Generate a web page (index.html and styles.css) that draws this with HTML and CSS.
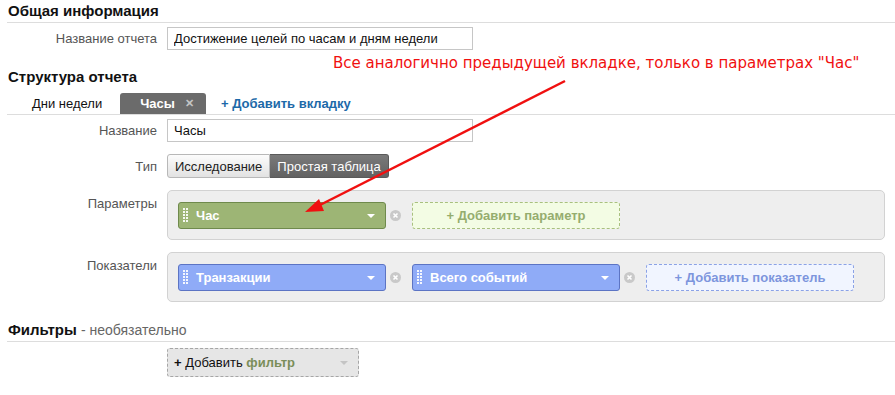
FILE: index.html
```html
<!DOCTYPE html>
<html lang="ru">
<head>
    <meta charset="UTF-8">
    <meta name="viewport" content="width=device-width, initial-scale=1.0">
    <title>Структура отчета</title>
    <link rel="stylesheet" href="styles.css">
</head>
<body>
<div class="page">
    <h2 class="section-title">Общая информация</h2>
    <div class="row row-first">
        <label class="row-label" for="report-name">Название отчета</label>
        <input class="text-input" type="text" id="report-name" value="Достижение целей по часам и дням недели">
    </div>

    <h2 class="section-title no-line title-structure">Структура отчета</h2>
    <div class="tabs">
        <span class="tab">Дни недели</span>
        <span class="tab tab-active">Часы<span class="tab-close">&#x2715;</span></span>
        <a class="tab tab-add" href="#">+ Добавить вкладку</a>
    </div>

    <div class="row row-name">
        <label class="row-label" for="tab-name">Название</label>
        <input class="text-input" type="text" id="tab-name" value="Часы">
    </div>

    <div class="row row-type">
        <span class="row-label">Тип</span>
        <div class="btn-group">
            <button type="button" class="btn">Исследование</button>
            <button type="button" class="btn btn-on">Простая таблица</button>
        </div>
    </div>

    <div class="row row-top">
        <span class="row-label">Параметры</span>
        <div class="drop-box">
            <div class="chip chip-green"><span class="grip"></span>Час<span class="caret"></span></div>
            <svg class="remove" width="11" height="11" viewBox="0 0 11 11"><circle cx="5.5" cy="5.5" r="5.5" fill="#c9c9c9"/><path d="M3.5 3.5l4 4M7.5 3.5l-4 4" stroke="#fff" stroke-width="1.6"/></svg>
            <div class="add-slot add-green">+ Добавить параметр</div>
        </div>
    </div>

    <div class="row row-top">
        <span class="row-label">Показатели</span>
        <div class="drop-box">
            <div class="chip chip-blue"><span class="grip"></span>Транзакции<span class="caret"></span></div>
            <svg class="remove" width="11" height="11" viewBox="0 0 11 11"><circle cx="5.5" cy="5.5" r="5.5" fill="#c9c9c9"/><path d="M3.5 3.5l4 4M7.5 3.5l-4 4" stroke="#fff" stroke-width="1.6"/></svg>
            <div class="chip chip-blue"><span class="grip"></span>Всего событий<span class="caret"></span></div>
            <svg class="remove" width="11" height="11" viewBox="0 0 11 11"><circle cx="5.5" cy="5.5" r="5.5" fill="#c9c9c9"/><path d="M3.5 3.5l4 4M7.5 3.5l-4 4" stroke="#fff" stroke-width="1.6"/></svg>
            <div class="add-slot add-blue">+ Добавить показатель</div>
        </div>
    </div>

    <h2 class="section-title title-filters">Фильтры <span class="optional">- необязательно</span></h2>
    <div class="row row-filter">
        <span class="row-label"></span>
        <div class="filter-select"><b>+</b> Добавить <b class="filter-word">фильтр</b><span class="caret caret-gray"></span></div>
    </div>

    <div class="note">Все аналогично предыдущей вкладке, только в параметрах "Час"</div>
    <svg class="arrow" width="895" height="395" viewBox="0 0 895 395">
        <line x1="565" y1="81" x2="318" y2="206" stroke="#f01010" stroke-width="2.5"/>
        <polygon points="305,212 319,199 324,211" fill="#f01010"/>
    </svg>
</div>
</body>
</html>
```

FILE: styles.css
```css
body {
    margin: 0;
    font-family: "Liberation Sans", Arial, sans-serif;
    font-size: 13px;
    color: #222;
    background: #fff;
}
.page {
    position: relative;
    width: 888px;
    height: 395px;
    padding-left: 7px;
    overflow: hidden;
}
.section-title {
    margin: 0;
    padding-left: 1px;
    font-size: 15px;
    line-height: 22px;
    font-weight: bold;
    color: #111;
    border-bottom: 1px solid #ddd;
}
.section-title.no-line {
    border-bottom: none;
}
.title-structure {
    margin-top: 16px;
}
.title-filters {
    margin-top: 17px;
}
.optional {
    font-weight: normal;
    font-size: 14px;
    color: #666;
}
.row {
    display: flex;
    align-items: center;
    padding-right: 10px;
}
.row-label {
    width: 150px;
    flex: none;
    margin-right: 10px;
    text-align: right;
    color: #555;
}
.row-first {
    margin-top: 4px;
}
.row-name {
    margin-top: 4px;
}
.row-type {
    margin-top: 12px;
}
.row-top {
    margin-top: 12px;
    align-items: flex-start;
}
.row-top .row-label {
    padding-top: 6px;
}
.row-filter {
    margin-top: 6px;
}
.text-input {
    width: 306px;
    height: 23px;
    box-sizing: border-box;
    padding: 0 6px;
    border: 1px solid #c6c6c6;
    font-family: inherit;
    font-size: 13px;
    color: #111;
}
.tabs {
    display: flex;
    align-items: flex-end;
    height: 26px;
    padding-left: 13px;
    border-bottom: 1px solid #ddd;
}
.tab {
    display: inline-flex;
    align-items: center;
    height: 21px;
    padding: 0 12px;
    white-space: nowrap;
    color: #111;
}
.tab-active {
    margin-left: 6px;
    padding: 0 12px 0 20px;
    background: #6b6b6b;
    color: #fff;
    font-weight: bold;
    border-radius: 3px 3px 0 0;
}
.tab-close {
    margin-left: 10px;
    color: #c4c4c4;
    font-size: 11px;
    font-weight: bold;
}
.tab-add {
    padding-left: 15px;
    color: #1c69a8;
    font-weight: bold;
    text-decoration: none;
}
.btn-group {
    display: flex;
}
.btn {
    height: 24px;
    padding: 0 7px;
    border: 1px solid #b8b8b8;
    background: linear-gradient(#fcfcfc, #e2e2e2);
    font-family: inherit;
    font-size: 13px;
    color: #222;
    border-radius: 3px 0 0 3px;
}
.btn-on {
    border-color: #5a5a5a;
    border-left: none;
    background: linear-gradient(#7a7a7a, #626262);
    color: #fff;
    border-radius: 0 3px 3px 0;
}
.drop-box {
    flex: 1;
    display: flex;
    align-items: center;
    height: 48px;
    padding: 0 10px;
    background: #eee;
    border: 1px solid #d2d2d2;
    border-radius: 5px;
}
.chip {
    position: relative;
    display: flex;
    align-items: center;
    width: 208px;
    height: 27px;
    box-sizing: border-box;
    padding-left: 4px;
    border: 1px solid;
    border-radius: 3px;
    color: #fff;
    font-weight: bold;
    font-size: 13px;
}
.chip-green {
    background: #9db575;
    border-color: #6f8a4c;
}
.chip-blue {
    background: #8fabf7;
    border-color: #5c74c4;
}
.grip {
    width: 6px;
    height: 15px;
    margin-right: 7px;
    background: radial-gradient(circle at 1px 1px, rgba(255, 255, 255, 0.9) 0.8px, transparent 1px) 0 0 / 3px 3px;
}
.caret {
    position: absolute;
    right: 10px;
    top: 11px;
    border-left: 4px solid transparent;
    border-right: 4px solid transparent;
    border-top: 4px solid #fff;
}
.caret-gray {
    border-top-color: #c4c4c4;
    top: 12px;
}
.remove {
    flex: none;
    margin: 0 11px 0 4px;
}
.add-slot {
    width: 208px;
    height: 27px;
    box-sizing: border-box;
    line-height: 25px;
    text-align: center;
    border: 1px dashed;
    border-radius: 3px;
    font-weight: bold;
    font-size: 13px;
}
.add-green {
    background: #f3fce4;
    border-color: #a9c07f;
    color: #95ad6e;
}
.add-blue {
    background: #f1f5ff;
    border-color: #8ba2e6;
    color: #7d95dd;
}
.filter-select {
    position: relative;
    width: 192px;
    height: 29px;
    box-sizing: border-box;
    padding-left: 6px;
    line-height: 27px;
    background: #e6e6e6;
    border: 1px dashed #a6a6a6;
    border-radius: 3px;
    color: #111;
}
.filter-word {
    color: #7b8e5a;
}
.note {
    position: absolute;
    left: 333px;
    top: 54px;
    font-family: "DejaVu Sans", Tahoma, sans-serif;
    font-size: 15px;
    color: #f01010;
    white-space: nowrap;
}
.arrow {
    position: absolute;
    left: 0;
    top: 0;
    pointer-events: none;
}
```
